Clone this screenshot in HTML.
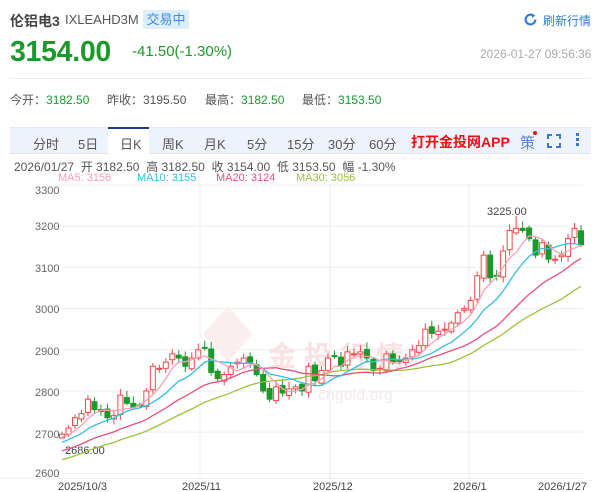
<!DOCTYPE html>
<html><head><meta charset="utf-8"><style>
*{margin:0;padding:0;box-sizing:border-box}
body{width:600px;height:492px;overflow:hidden;background:#fff;font-family:"Liberation Sans","Noto Sans CJK SC",sans-serif;position:relative;color:#333}
.a{position:absolute;white-space:nowrap}
.t{position:absolute;top:134px;font-size:13px;color:#555}
</style></head><body>
<div class="a" style="left:10px;top:11px;font-size:14px;font-weight:bold;color:#444">伦铝电3</div>
<div class="a" style="left:65px;top:12px;font-size:13px;color:#555">IXLEAHD3M</div>
<div class="a" style="left:143px;top:10px;width:46px;height:19px;background:#ddeefc;color:#3a8ee6;font-size:13px;line-height:19px;text-align:center">交易中</div>
<svg class="a" style="left:524px;top:13px" width="13" height="13" viewBox="0 0 12 12"><path d="M10.5 6A4.5 4.5 0 1 1 8.5 2.3" fill="none" stroke="#2d7be0" stroke-width="2"/><path d="M7 0.5L10.5 2.2L7.6 4.6Z" fill="#2d7be0"/></svg>
<div class="a" style="left:543px;top:12px;font-size:12px;color:#2d7be0">刷新行情</div>
<div class="a" style="left:10px;top:36px;font-size:28.5px;font-weight:bold;color:#1b9a2b;letter-spacing:-0.3px">3154.00</div>
<div class="a" style="left:132px;top:43px;font-size:15px;color:#1b9a2b">-41.50(-1.30%)</div>
<div class="a" style="left:480px;top:47px;font-size:12px;color:#aaa">2026-01-27 09:56:36</div>
<div class="a" style="left:9px;top:78px;width:582px;height:1px;background:#eee"></div>
<div class="a" style="left:10px;top:91px;font-size:12px;color:#555">今开：<span style="color:#1b9a2b">3182.50</span></div>
<div class="a" style="left:107px;top:91px;font-size:12px;color:#555">昨收：3195.50</div>
<div class="a" style="left:205px;top:91px;font-size:12px;color:#555">最高：<span style="color:#1b9a2b">3182.50</span></div>
<div class="a" style="left:302px;top:91px;font-size:12px;color:#555">最低：<span style="color:#1b9a2b">3153.50</span></div>
<div class="a" style="left:10px;top:127px;width:581px;height:27px;background:#eef3fb;border-top:1px solid #e3e9f3;border-bottom:1px solid #dde4ee"></div>
<div class="a" style="left:108px;top:127px;width:41px;height:27px;background:#fff;border-top:2px solid #1d3c8f"></div>
<span class="t" style="left:33px">分时</span><span class="t" style="left:78px">5日</span><span class="t" style="left:120px">日K</span><span class="t" style="left:162px">周K</span><span class="t" style="left:204px">月K</span><span class="t" style="left:247px">5分</span><span class="t" style="left:287px">15分</span><span class="t" style="left:328px">30分</span><span class="t" style="left:369px">60分</span>
<div class="a" style="left:411px;top:132px;font-size:14px;font-weight:bold;color:#f01010">打开金投网APP</div>
<div class="a" style="left:520px;top:132px;font-size:15px;color:#5b86c9">策</div>
<div class="a" style="left:533px;top:131px;width:4px;height:4px;border-radius:50%;background:#f01010"></div>
<svg class="a" style="left:547px;top:134px" width="14" height="14"><path d="M1 5V1H5M9 1H13V5M13 9V13H9M5 13H1V9" fill="none" stroke="#3c78d0" stroke-width="2"/></svg>
<div class="a" style="left:576px;top:133px;width:3px;height:3px;background:#3c78d0;box-shadow:0 5px #3c78d0,0 10px #3c78d0"></div>
<div class="a" style="left:14px;top:158px;font-size:12px;color:#555">2026/01/27 &nbsp;开 3182.50 &nbsp;高 3182.50 &nbsp;收 3154.00 &nbsp;低 3153.50 &nbsp;幅 -1.30%</div>
<div class="a" style="left:58px;top:172px;font-size:11px;color:#f9a0b8">MA5: 3156</div>
<div class="a" style="left:137px;top:172px;font-size:11px;color:#33bfe0">MA10: 3155</div>
<div class="a" style="left:216px;top:172px;font-size:11px;color:#e8507a">MA20: 3124</div>
<div class="a" style="left:296px;top:172px;font-size:11px;color:#9cc23a">MA30: 3056</div>
<svg class="a" style="left:0;top:184px" width="600" height="308">
<g font-size="11" fill="#666" font-family="Liberation Sans,sans-serif">
<text x="35" y="10">3300</text><text x="35" y="46">3200</text><text x="35" y="88">3100</text><text x="35" y="129">3000</text><text x="35" y="171">2900</text><text x="35" y="212">2800</text><text x="35" y="254">2700</text><text x="35" y="293">2600</text>
<text x="58" y="306" fill="#444">2025/10/3</text><text x="182" y="306" fill="#444">2025/11</text><text x="313" y="306" fill="#444">2025/12</text><text x="453" y="306" fill="#444">2026/1</text><text x="538" y="306" fill="#444">2026/1/27</text>
<text x="65" y="270" fill="#444">2686.00</text><text x="487" y="31" fill="#444">3225.00</text>
</g>
<g id="g"></g>
</svg>
<script>
var Y=function(p){return 42.3+(3200-p)*0.4117};
var s='';
[3300,3200,3100,3000,2900,2800,2700,2600].forEach(function(p){s+='<line x1="62" x2="583" y1="'+Y(p)+'" y2="'+Y(p)+'" stroke="#eee"/>'});
s+='<line x1="0" x2="583" y1="'+(Y(2600)+5)+'" y2="'+(Y(2600)+5)+'" stroke="#eee"/>';
[200,330,469].forEach(function(x){s+='<line x1="'+x+'" x2="'+x+'" y1="0" y2="'+(Y(2600)+5)+'" stroke="#eee"/>'});
s+='<path d="M228 122L252 150L228 178L203 150Z" fill="#fbeeee"/>';
s+='<text x="268" y="182" font-size="28" fill="#f9e2e2" font-weight="bold" font-family="Noto Sans CJK SC,sans-serif" letter-spacing="8">金投行情</text>';
s+='<text x="318" y="216" font-size="16" fill="#f3eaea" font-family="Liberation Sans,sans-serif">cngold.org</text>';
var c=[2695,2710,2735,2745,2780,2755,2750,2735,2740,2790,2770,2760,2765,2800,2860,2855,2870,2890,2880,2860,2880,2900,
2905,2845,2830,2840,2860,2870,2880,2870,2840,2800,2780,2810,2795,2805,2810,2800,2860,2825,2850,2880,
2885,2860,2895,2890,2895,2880,2850,2855,2890,2870,2872,2880,2900,2910,2950,2940,2945,2950,2965,2990,3000,3020,
3080,3130,3075,3080,3140,3190,3195,3190,3170,3130,3160,3120,3120,3130,3170,3195,3155];
var pre=[];for(var i=0;i<30;i++)pre.push(2560+i*4.3+(i%3)*6);
var all=pre.concat(c),n=c.length,dx=519/(n-1);
function ma(k,col){var d='';for(var i=0;i<n;i++){var j=i+30,t=0;for(var m=0;m<k;m++)t+=all[j-m];d+=(i?'L':'M')+(62+i*dx).toFixed(1)+' '+Y(t/k).toFixed(1)}s+='<path d="'+d+'" fill="none" stroke="'+col+'" stroke-width="1.3"/>'}
for(var i=0;i<n;i++){var o=i?c[i-1]+((i*7)%5-2)*3:2686,cl=c[i],x=62+i*dx,up=cl>=o,col=up?'#f04848':'#1a9a2a';
var hi=Math.max(o,cl)+6+(i*13)%12,lo=Math.min(o,cl)-5-(i*11)%10;if(i==0)lo=2686;if(i==70)hi=3225;
s+='<line x1="'+x+'" x2="'+x+'" y1="'+Y(hi)+'" y2="'+Y(lo)+'" stroke="'+col+'"/>';
var t=Y(Math.max(o,cl)),h=Math.max(1,Y(Math.min(o,cl))-t);
s+='<rect x="'+(x-2.5)+'" y="'+t+'" width="5" height="'+h+'" fill="'+(up?'#fff':col)+'" stroke="'+col+'"/>';}
ma(30,'#9cc23a');ma(20,'#e8507a');ma(10,'#33bfe0');ma(5,'#f9a0b8');
document.getElementById('g').innerHTML=s;
</script>
</body></html>
